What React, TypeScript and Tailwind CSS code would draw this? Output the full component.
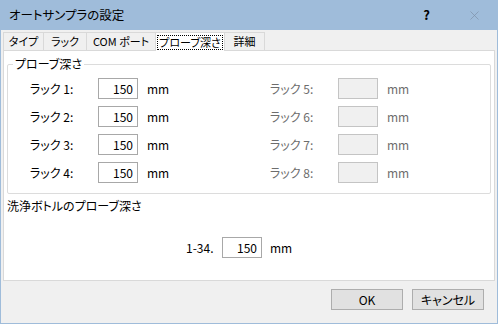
import { X } from "lucide-react";

const font = "[font-family:'Noto_Sans_CJK_JP','Noto_Sans',sans-serif] [font-feature-settings:'palt']";

type Rack = { label: string; value: string; enabled: boolean };

const left: Rack[] = [
  { label: "ラック 1:", value: "150", enabled: true },
  { label: "ラック 2:", value: "150", enabled: true },
  { label: "ラック 3:", value: "150", enabled: true },
  { label: "ラック 4:", value: "150", enabled: true },
];

const right: Rack[] = [
  { label: "ラック 5:", value: "", enabled: false },
  { label: "ラック 6:", value: "", enabled: false },
  { label: "ラック 7:", value: "", enabled: false },
  { label: "ラック 8:", value: "", enabled: false },
];

function RackRow({ rack }: { rack: Rack }) {
  return (
    <div className={`flex h-[28px] items-start ${rack.enabled ? "text-black" : "text-[#6d6d6d]"}`}>
      <span className="flex h-[21px] w-[68px] items-center">{rack.label}</span>
      <input
        readOnly
        disabled={!rack.enabled}
        value={rack.value}
        className={`h-[21px] w-[40px] border px-[4px] text-right text-[12px] outline-none ${
          rack.enabled ? "border-[#a8a8a8] bg-white text-black" : "border-[#c4c4c4] bg-[#f0f0f0]"
        }`}
      />
      <span className="ml-[9px] flex h-[21px] items-center">mm</span>
    </div>
  );
}

function Tab({ label, active, className }: { label: string; active?: boolean; className: string }) {
  if (active) {
    return (
      <div
        className={`relative z-10 -mb-px flex h-[19px] shrink-0 items-center justify-center whitespace-nowrap border-x border-t border-[#d9d9d9] bg-white ${className}`}
      >
        <span className="flex h-[15px] items-center border border-dotted border-black px-[1px] leading-none">
          {label}
        </span>
      </div>
    );
  }
  return (
    <div
      className={`flex h-[18px] shrink-0 items-center justify-center whitespace-nowrap border-t border-[#d9d9d9] bg-[#f0f0f0] ${className}`}
    >
      {label}
    </div>
  );
}

export default function App() {
  return (
    <div
      className={`flex h-[324px] w-[498px] flex-col border-x border-b border-[#9fbcda] bg-[#f0f0f0] text-[12px] text-black ${font}`}
    >
      <div className="-mx-px flex h-[30px] shrink-0 items-center bg-[#9fbcda] pl-[9px]">
        <span className="text-[12.5px]">オートサンプラの設定</span>
        <span className="ml-auto mr-[37px] text-[13px] font-semibold">?</span>
        <X className="mr-[16px] h-[15px] w-[15px] text-[#7d90a8]" strokeWidth={1.1} aria-hidden="true" />
      </div>

      <div className="flex flex-col px-[2px]">
        <div className="flex h-[20px] items-end text-[11px]">
          <Tab label="タイプ" className="w-[40px] border-l" />
          <Tab label="ラック" className="w-[43px] border-l" />
          <Tab label="COM ポート" className="w-[69px] border-l" />
          <Tab label="プローブ深さ" active className="w-[70px]" />
          <Tab label="詳細" className="w-[40px] border-r" />
        </div>

        <div className="flex h-[231px] flex-col border border-[#d9d9d9] bg-white">
          <div className="relative mx-[3px] mt-[13px] rounded-[2px] border border-[#dcdcdc] pb-[3px] pt-[13px]">
            <span className="absolute -top-[10px] left-[5px] bg-white px-[2px] leading-[18px]">プローブ深さ</span>
            <div className="grid grid-cols-[240px_1fr] pl-[22px]">
              <div className="flex flex-col">
                {left.map((rack) => (
                  <RackRow key={rack.label} rack={rack} />
                ))}
              </div>
              <div className="flex flex-col">
                {right.map((rack) => (
                  <RackRow key={rack.label} rack={rack} />
                ))}
              </div>
            </div>
          </div>

          <div className="ml-[3px] mt-[4px] leading-[16px]">洗浄ボトルのプローブ深さ</div>

          <div className="ml-[182px] mt-[23px] flex items-center">
            <span className="w-[36px]">1-34.</span>
            <input
              readOnly
              value="150"
              className="h-[21px] w-[40px] border border-[#a8a8a8] bg-white px-[4px] text-right text-[12px] outline-none"
            />
            <span className="ml-[8px]">mm</span>
          </div>
        </div>

        <div className="mr-[11px] mt-[8px] flex justify-end gap-[9px]">
          <button className="h-[21px] w-[72px] border border-[#adadad] bg-[#e1e1e1] text-[12px]">OK</button>
          <button className="h-[21px] w-[72px] border border-[#adadad] bg-[#e1e1e1] text-[12px]">キャンセル</button>
        </div>
      </div>
    </div>
  );
}
